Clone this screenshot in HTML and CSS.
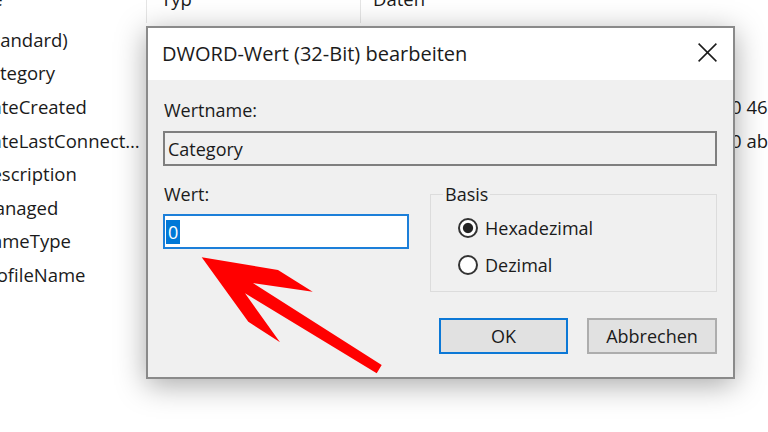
FILE: index.html
```html
<!DOCTYPE html>
<html lang="de">
<head>
<meta charset="utf-8">
<title>DWORD-Wert (32-Bit) bearbeiten</title>
<link rel="stylesheet" href="styles.css">
</head>
<body>
<div class="regview">
  <div class="reghead">
    <div class="col-name"><span>Name</span></div>
    <div class="col-type"><span>Typ</span></div>
    <div class="col-data"><span>Daten</span></div>
  </div>
  <ul class="reglist">
    <li><span class="name">(Standard)</span><span class="type">REG_SZ</span><span class="data">(Wert nicht festgelegt)</span></li>
    <li><span class="name">Category</span><span class="type">REG_DWORD</span><span class="data">0x00000000 (0)</span></li>
    <li><span class="name">DateCreated</span><span class="type">REG_BINARY</span><span class="data">e5 07 0f 00 02 00 1f 00 0c 00 2f 00 10 00 00 46 03 00</span></li>
    <li><span class="name">DateLastConnected</span><span class="type">REG_BINARY</span><span class="data">e5 07 0f 00 02 00 1f 00 0c 00 2f 00 11 00 00 ab 02 00</span></li>
    <li><span class="name">Description</span><span class="type">REG_SZ</span><span class="data">Netzwerk</span></li>
    <li><span class="name">Managed</span><span class="type">REG_DWORD</span><span class="data">0x00000000 (0)</span></li>
    <li><span class="name">NameType</span><span class="type">REG_DWORD</span><span class="data">0x00000047 (71)</span></li>
    <li><span class="name">ProfileName</span><span class="type">REG_SZ</span><span class="data">Netzwerk</span></li>
  </ul>
</div>

<div class="dialog" role="dialog" aria-label="DWORD-Wert (32-Bit) bearbeiten">
  <div class="titlebar">
    <span class="title">DWORD-Wert (32-Bit) bearbeiten</span>
    <button class="close" aria-label="Schließen">
      <svg viewBox="0 0 19 19" width="19" height="19"><path d="M0.6 0.6 L18.4 18.4 M18.4 0.6 L0.6 18.4" stroke="#1b1b1b" stroke-width="1.5" fill="none"/></svg>
    </button>
  </div>
  <div class="dlg-body">
    <div class="lbl">Wertname:</div>
    <div class="field readonly">Category</div>
    <div class="row">
      <div class="valcol">
        <div class="lbl">Wert:</div>
        <div class="field active"><span class="sel">0</span></div>
      </div>
      <fieldset class="basis">
        <legend>Basis</legend>
        <div class="radio checked"><span class="dot"></span>Hexadezimal</div>
        <div class="radio"><span class="dot"></span>Dezimal</div>
      </fieldset>
    </div>
    <div class="buttons">
      <button class="btn default">OK</button>
      <button class="btn">Abbrechen</button>
    </div>
  </div>
</div>

<svg class="arrow" viewBox="195 250 195 130" width="195" height="130" aria-hidden="true">
  <polygon fill="#ff0000" points="201.7,257.3 278,270 312.7,291.7 253,283 381.7,365 376.7,373.3 245,293.3 280,342.3 248.3,321.7"/>
</svg>
</body>
</html>
```

FILE: styles.css
```css
* { box-sizing: border-box; }

html, body { margin: 0; }

body {
  width: 768px;
  height: 432px;
  overflow: hidden;
  position: relative;
  background: #ffffff;
  font-family: "Open Sans", "Noto Sans", sans-serif;
  font-size: 18px;
  line-height: 24px;
  color: #1b1b1b;
}

/* background registry list (horizontally scrolled) */
.regview {
  margin-left: -60px;
  width: 900px;
  font-size: 18.5px;
  white-space: nowrap;
  color: #1a1a1a;
}

.reghead {
  display: grid;
  grid-template-columns: 206px 214px 1fr;
  height: 23px;
}

.reghead > div { padding-left: 14px; }
.reghead .col-name { padding-left: 11px; }
.reghead .col-data { padding-left: 12px; }
.reghead .col-type,
.reghead .col-data { border-left: 1px solid #e5e5e5; }
.reghead span { display: block; margin-top: -13px; }

.reglist { list-style: none; margin: 0; padding: 0; }

.reglist li {
  display: grid;
  grid-template-columns: 206px 214px 1fr;
  height: 33.6px;
  align-items: center;
}

.reglist .name {
  padding-left: 38px;
  padding-right: 4px;
  overflow: hidden;
  text-overflow: ellipsis;
}

.reglist .type { padding-left: 14px; }
.reglist .data { padding-left: 12px; }

/* dialog window */
.dialog {
  position: absolute;
  left: 146px;
  top: 26px;
  width: 589px;
  height: 353px;
  background: #f0f0f0;
  border: 2px solid #8a8a8a;
  box-shadow: 0 6px 28px rgba(0, 0, 0, 0.34);
  display: flex;
  flex-direction: column;
}

.titlebar {
  height: 52px;
  background: #ffffff;
  display: flex;
  align-items: center;
  justify-content: space-between;
  padding-left: 14px;
}

.title { font-size: 20px; line-height: 26px; }

.close {
  width: 52px;
  height: 52px;
  padding: 0 0 3px 0;
  border: 0;
  background: transparent;
  display: flex;
  align-items: center;
  justify-content: center;
}

.dlg-body {
  padding: 18px 16px 0 15px;
  display: flex;
  flex-direction: column;
}

.lbl { padding-left: 1px; }

.field {
  height: 35px;
  border: 2px solid #7f7f7f;
  display: flex;
  align-items: center;
}

.field.readonly {
  margin-top: 9px;
  padding-left: 3px;
  background: #f0f0f0;
}

.field.active {
  margin-top: 8px;
  padding-left: 1px;
  background: #ffffff;
  border-color: #1c7fd9;
}

.sel {
  background: #0078d7;
  color: #ffffff;
  padding: 0 2px;
}

.row {
  display: flex;
  gap: 21px;
  margin-top: 16px;
}

.valcol { width: 246px; }

.basis {
  width: 287px;
  margin: 0;
  padding: 8px 0 12px 12px;
  border: 1px solid #dcdcdc;
  display: flex;
  flex-direction: column;
  gap: 9px;
}

.basis legend {
  padding: 0 2px;
  line-height: 24px;
}

.radio {
  height: 28px;
  margin-left: 15px;
  display: flex;
  align-items: center;
}

.dot {
  width: 20px;
  height: 20px;
  border: 2px solid #333333;
  border-radius: 50%;
  background: #ffffff;
  margin-right: 7px;
}

.radio.checked .dot {
  background: radial-gradient(circle, #222222 0 4.6px, #ffffff 5.6px);
}

.buttons {
  display: flex;
  justify-content: flex-end;
  gap: 19px;
  margin-top: 26px;
}

.btn {
  width: 129px;
  height: 36px;
  padding: 0;
  font: inherit;
  color: #1b1b1b;
  background: #e1e1e1;
  border: 2px solid #adadad;
}

.btn + .btn { width: 130px; }

.btn.default { border-color: #0c78d6; }

.arrow {
  position: absolute;
  left: 195px;
  top: 250px;
}
```
